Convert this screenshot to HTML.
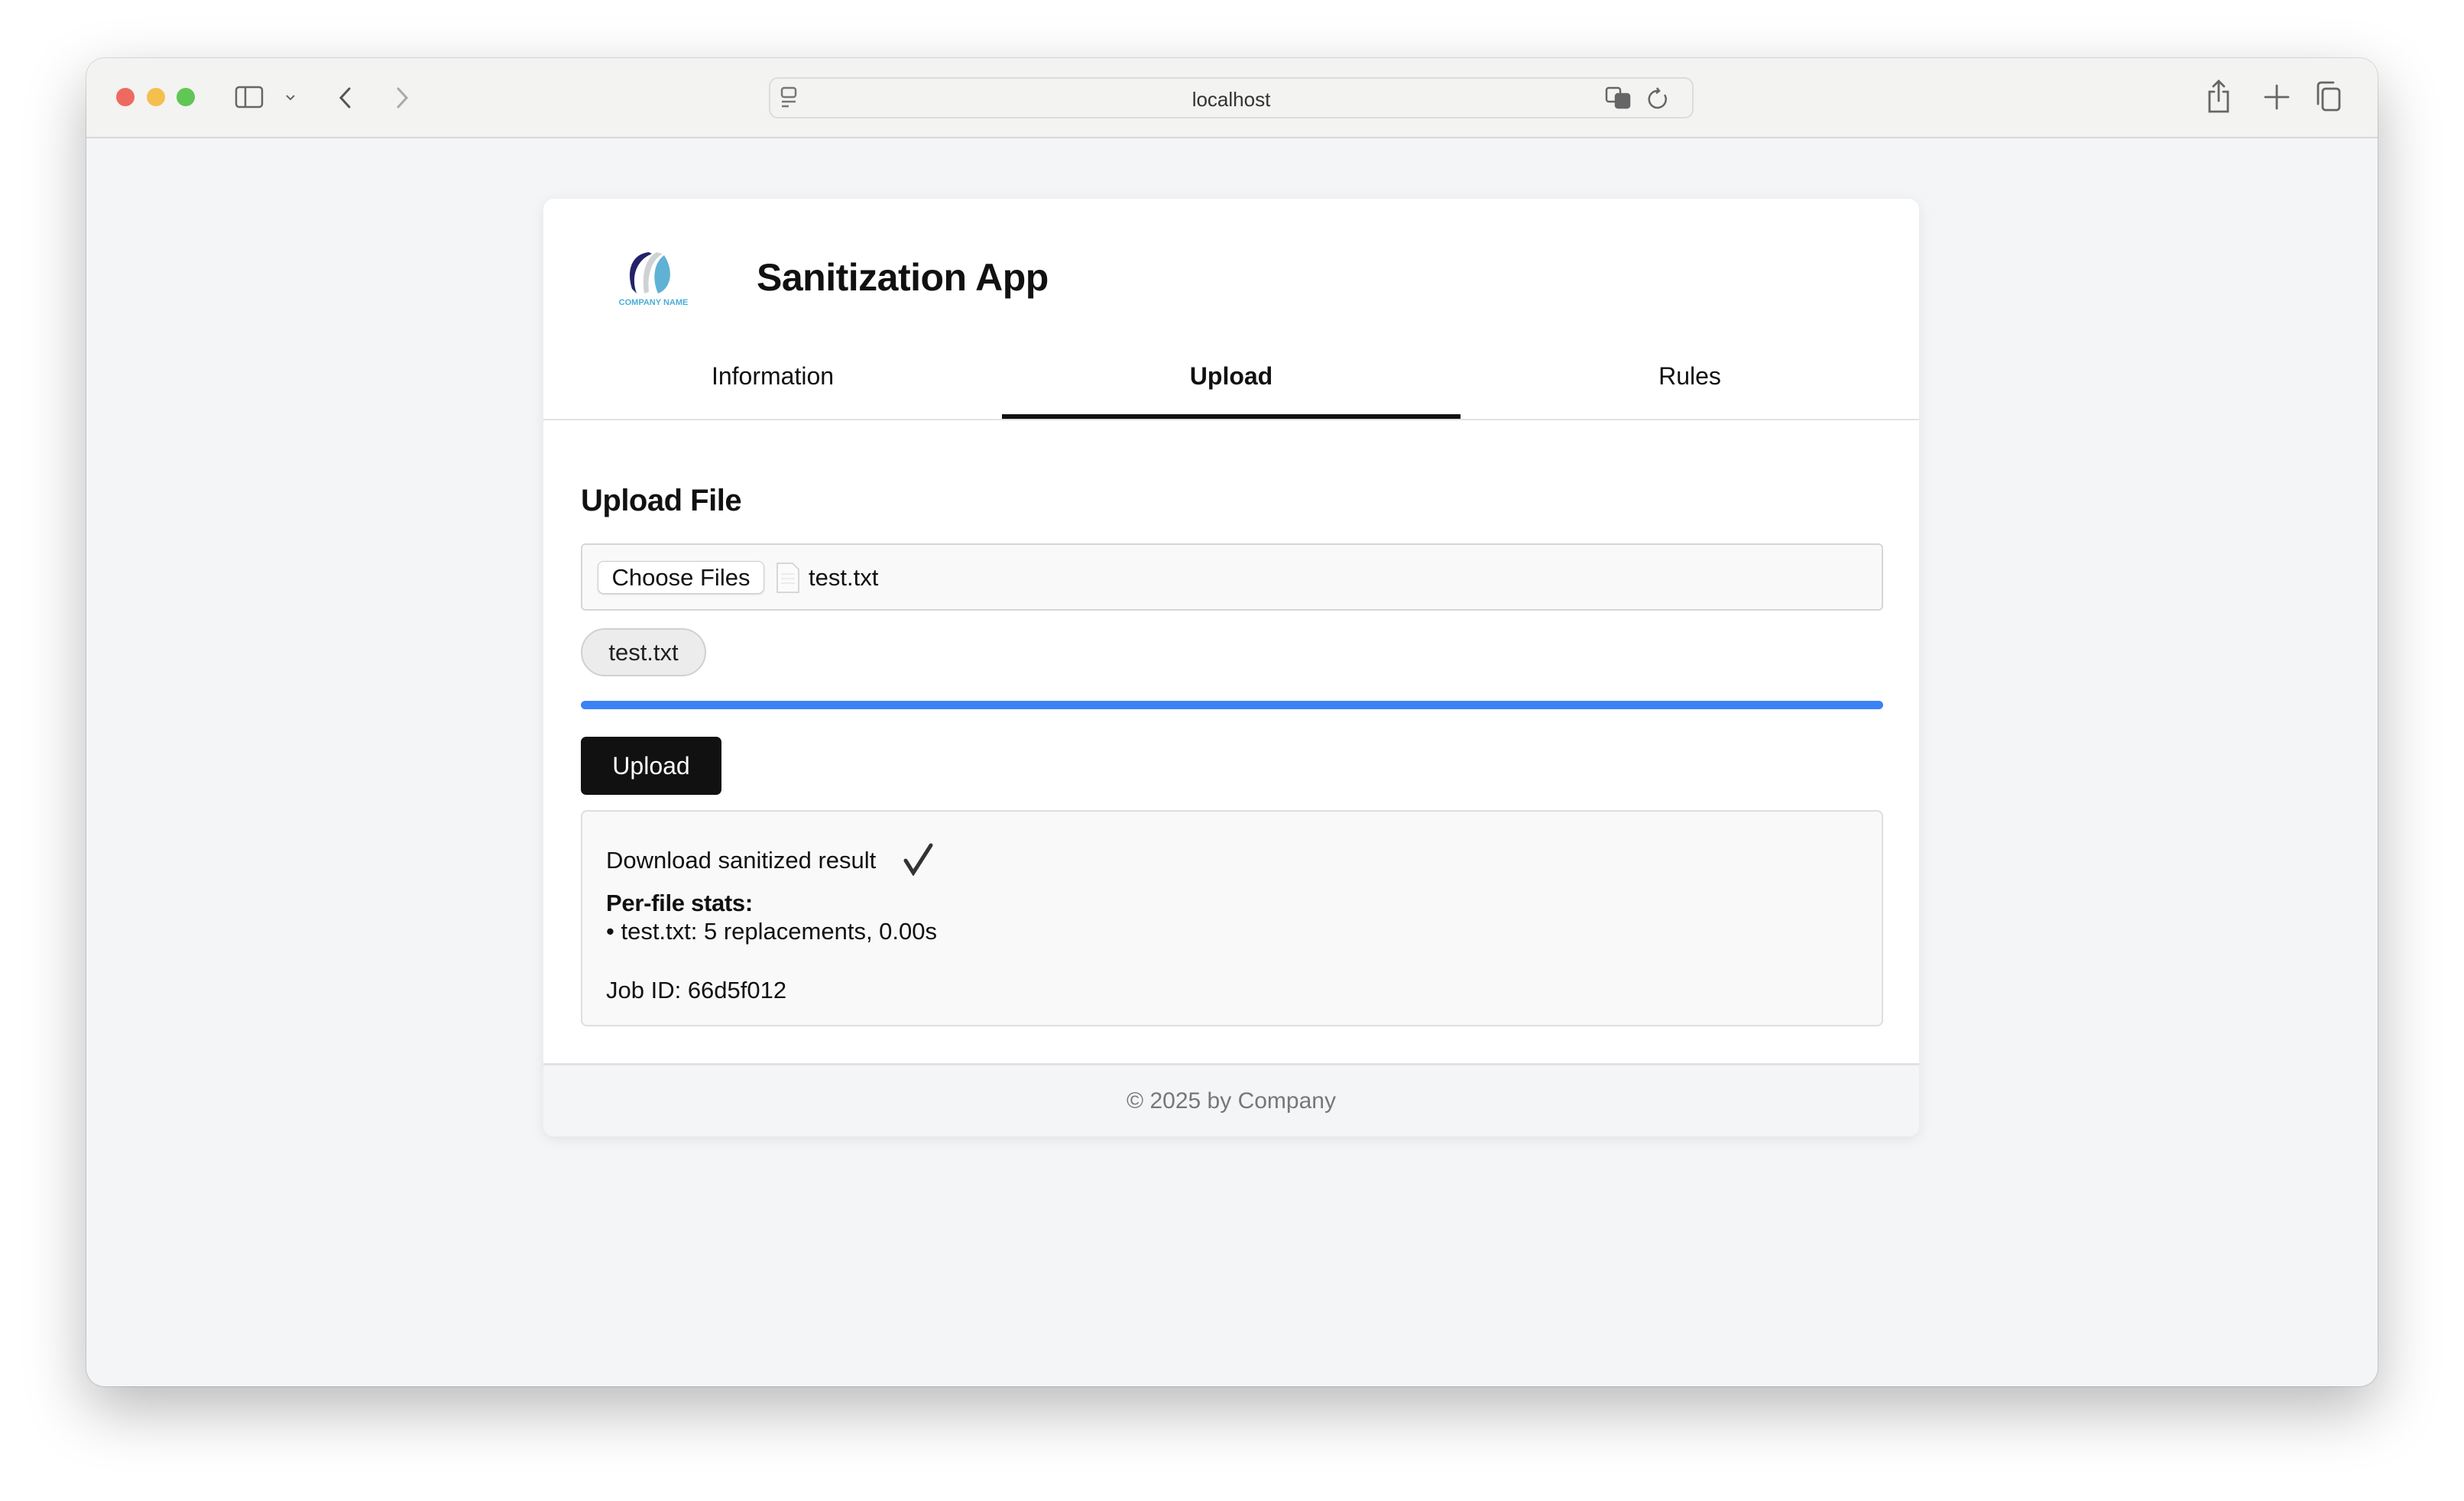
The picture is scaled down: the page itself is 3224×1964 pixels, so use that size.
<!DOCTYPE html>
<html><head><meta charset="utf-8"><style>
*{box-sizing:border-box;margin:0;padding:0}
body{width:3224px;height:1964px;background:#fff;position:relative;overflow:hidden;font-family:"Liberation Sans",sans-serif}
.win{position:absolute;left:113px;top:76px;width:2998px;height:1738px;border-radius:24px;background:#f4f5f7;overflow:hidden;box-shadow:0 30px 80px rgba(0,0,0,.28),0 0 0 1px rgba(0,0,0,.12)}
.tb{position:absolute;left:0;top:0;width:100%;height:105px;background:#f3f3f2;border-bottom:2px solid #d8d8d8}
.dot{position:absolute;top:39px;width:24px;height:24px;border-radius:50%}
.url{position:absolute;left:893px;top:25px;width:1210px;height:54px;border:2px solid #dcdcdc;border-radius:12px;background:#f3f3f2}
.url span{position:absolute;left:0;right:0;top:12px;text-align:center;font-size:26px;color:#333}
.card{position:absolute;left:598px;top:184px;width:1800px;height:1227px;background:#fff;border-radius:14px;box-shadow:0 4px 18px rgba(0,0,0,.08);overflow:hidden}
.abs{position:absolute}
.title{left:279px;top:74px;font-size:50px;font-weight:bold;color:#111;letter-spacing:-0.5px}
.tab{top:214px;width:600px;text-align:center;font-size:32px;color:#111}
.ul{left:600px;top:282px;width:600px;height:6px;background:#111}
.div{left:0;top:288px;width:1800px;height:2px;background:#e2e2e2}
.h2{left:49px;top:373px;font-size:40px;font-weight:bold;color:#111;letter-spacing:-0.5px}
.inp{left:49px;top:451px;width:1704px;height:88px;border:2px solid #d6d6d6;border-radius:6px;background:#f9f9f9}
.btn1{left:20px;top:21px;width:218px;height:43px;border:1px solid #ccc;border-radius:8px;background:#fff;font-size:31px;color:#111;text-align:center;line-height:41px;box-shadow:0 1px 2px rgba(0,0,0,.15)}
.chip{left:49px;top:562px;width:164px;height:63px;border:2px solid #d0d0d0;border-radius:32px;background:#ececec;font-size:31px;text-align:center;line-height:59px;color:#222}
.prog{left:49px;top:657px;width:1704px;height:11px;border-radius:6px;background:#3b82f6}
.up{left:49px;top:704px;width:184px;height:76px;border-radius:7px;background:#111;color:#fff;font-size:32px;text-align:center;line-height:76px}
.res{left:49px;top:800px;width:1704px;height:283px;border:2px solid #dedede;border-radius:8px;background:#f9f9f9}
.res div{position:absolute;left:31px;font-size:31px;color:#111}
.fbar{left:0;top:1131px;width:1800px;height:96px;background:#f4f5f7;border-top:3px solid #e2e2e2}
</style></head><body>
<div class="win">
 <div class="tb">
  <div class="dot" style="left:39px;background:#ee6a5f"></div>
  <div class="dot" style="left:79px;background:#f5bf4f"></div>
  <div class="dot" style="left:118px;background:#62c655"></div>
  <svg class="abs" style="left:194px;top:34px" width="120" height="36" viewBox="0 0 120 36" fill="none" stroke="#666" stroke-width="2.5"><rect x="2" y="4" width="34" height="26" rx="4"/><line x1="14" y1="4" x2="14" y2="30"/><path d="M68 15l5 5 5-5" stroke-width="2"/></svg>
  <svg class="abs" style="left:320px;top:34px" width="120" height="36" viewBox="0 0 120 36" fill="none" stroke-width="3" stroke-linecap="round"><path d="M24 6L13 18l11 12" stroke="#555"/><path d="M88 6l11 12-11 12" stroke="#aaa"/></svg>
  <div class="url"><svg class="abs" style="left:12px;top:10px" width="24" height="30" viewBox="0 0 24 30" fill="none" stroke="#777" stroke-width="2.5"><rect x="3" y="2" width="18" height="12" rx="3"/><line x1="3" y1="20" x2="21" y2="20"/><line x1="3" y1="26" x2="12" y2="26"/></svg><span>localhost</span>
   <svg class="abs" style="left:1090px;top:8px" width="90" height="36" viewBox="0 0 90 36" fill="none" stroke="#666" stroke-width="2.5"><rect x="4" y="4" width="18" height="18" rx="3"/><rect x="16" y="12" width="18" height="18" rx="3" fill="#666"/><path d="M72 8a11 11 0 1 0 8 5" /><path d="M70 4l3 4-4 3"/></svg></div>
  <svg class="abs" style="left:2770px;top:26px" width="200" height="50" viewBox="0 0 200 50" fill="none" stroke="#666" stroke-width="2.8" stroke-linecap="round"><path d="M14 18h-6v26h24V18h-6M20 4v26M13 11l7-7 7 7"/><path d="M96 10v30M81 25h30"/><rect x="156" y="14" width="22" height="28" rx="4"/><path d="M150 34V10a4 4 0 0 1 4-4h16"/></svg>
 </div>
 <div class="card">
  <svg class="abs" style="left:86px;top:66px" width="120" height="76" viewBox="0 0 120 76">
   <path d="M52 4C30 6 22 28 30 52l6 6C28 36 36 14 56 6z" fill="#23226a"/>
   <path d="M62 4C48 12 42 32 46 58l6-2C50 36 54 16 70 6z" fill="#cfd2d5"/>
   <path d="M72 8C58 18 56 40 64 58c16-6 22-28 8-50z" fill="#5fb2d4"/>
   <text x="58" y="73" font-size="11" font-weight="bold" fill="#4aaed6" text-anchor="middle" font-family="Liberation Sans,sans-serif">COMPANY NAME</text>
  </svg>
  <div class="abs title">Sanitization App</div>
  <div class="abs tab" style="left:0">Information</div>
  <div class="abs tab" style="left:600px;font-weight:bold">Upload</div>
  <div class="abs tab" style="left:1200px">Rules</div>
  <div class="abs div"></div><div class="abs ul"></div>
  <div class="abs h2">Upload File</div>
  <div class="abs inp"><div class="abs btn1">Choose Files</div>
   <svg class="abs" style="left:252px;top:22px" width="34" height="42" viewBox="0 0 34 42"><path d="M3 2h20l8 8v30H3z" fill="#fbfbfb" stroke="#ccc" stroke-width="1.5"/><g stroke="#ddd"><line x1="8" y1="16" x2="26" y2="16"/><line x1="8" y1="22" x2="26" y2="22"/><line x1="8" y1="28" x2="26" y2="28"/></g></svg>
   <div class="abs" style="left:296px;top:25px;font-size:31px;color:#111">test.txt</div></div>
  <div class="abs chip">test.txt</div>
  <div class="abs prog"></div>
  <div class="abs up">Upload</div>
  <div class="abs res">
   <div style="top:46px">Download sanitized result</div>
   <svg class="abs" style="left:418px;top:40px" width="44" height="44" viewBox="0 0 44 44" fill="none" stroke="#333" stroke-width="5" stroke-linecap="round"><path d="M5 24l10 16L38 4"/></svg>
   <div style="top:102px;font-weight:bold;letter-spacing:-0.3px">Per-file stats:</div>
   <div style="top:139px">• test.txt: 5 replacements, 0.00s</div>
   <div style="top:216px">Job ID: 66d5f012</div>
  </div>
  <div class="abs fbar"></div>
  <div class="abs" style="left:0;width:1800px;top:1164px;text-align:center;font-size:30px;color:#777">© 2025 by Company</div>
 </div>
</div>
</body></html>
